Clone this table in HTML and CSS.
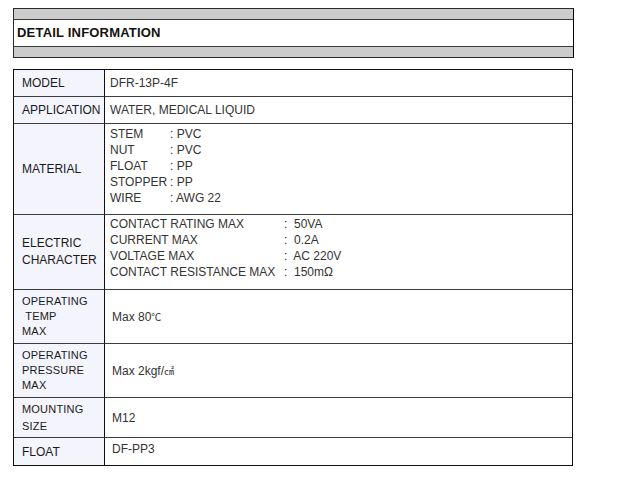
FILE: index.html
```html
<!DOCTYPE html>
<html>
<head>
<meta charset="utf-8">
<link rel="stylesheet" href="styles.css">
</head>
<body>
<div class="page">
  <div class="header">
    <div class="band"></div>
    <div class="title">DETAIL INFORMATION</div>
    <div class="band"></div>
  </div>

  <div class="spec">
    <div class="lbl">MODEL</div>
    <div class="val">DFR-13P-4F</div>

    <div class="lbl">APPLICATION</div>
    <div class="val">WATER, MEDICAL LIQUID</div>

    <div class="lbl">MATERIAL</div>
    <div class="val top">
      <div class="kv mat">
        <span class="k">STEM</span><span class="c">: PVC</span>
        <span class="k">NUT</span><span class="c">: PVC</span>
        <span class="k">FLOAT</span><span class="c">: PP</span>
        <span class="k">STOPPER</span><span class="c">: PP</span>
        <span class="k">WIRE</span><span class="c">: AWG 22</span>
      </div>
    </div>

    <div class="lbl multi">ELECTRIC<br>CHARACTER</div>
    <div class="val top elec-val">
      <div class="kv elec">
        <span class="k">CONTACT RATING MAX</span><span class="c">:&nbsp; 50VA</span>
        <span class="k">CURRENT MAX</span><span class="c">:&nbsp; 0.2A</span>
        <span class="k">VOLTAGE MAX</span><span class="c">:&nbsp; AC 220V</span>
        <span class="k">CONTACT RESISTANCE MAX</span><span class="c">:&nbsp; 150mΩ</span>
      </div>
    </div>

    <div class="lbl small">OPERATING<br>&nbsp;TEMP<br>MAX</div>
    <div class="val wide">Max 80<span class="unit">℃</span></div>

    <div class="lbl small">OPERATING<br>PRESSURE<br>MAX</div>
    <div class="val wide">Max 2kgf/<span class="unit">㎠</span></div>

    <div class="lbl small mount">MOUNTING<br>SIZE</div>
    <div class="val wide">M12</div>

    <div class="lbl last">FLOAT</div>
    <div class="val wide top float-val last">DF-PP3</div>
  </div>
</div>
</body>
</html>
```

FILE: styles.css
```css
html, body {
  margin: 0;
  padding: 0;
  background: #ffffff;
}

body {
  font-family: "Liberation Sans", Arial, "Noto Sans CJK KR", sans-serif;
  font-size: 12px;
  color: #222;
}

.page {
  padding: 8px 0 0 13px;
}

.header {
  width: 561px;
  box-sizing: border-box;
  border: 1px solid #2a2a2a;
  border-right-color: #000;
}

.band {
  height: 10px;
  background: #cccccc;
}

.title {
  height: 26px;
  border-top: 1px solid #3a3a3a;
  border-bottom: 1px solid #3a3a3a;
  background: #fff;
  padding-left: 3px;
  font-weight: bold;
  font-size: 13px;
  letter-spacing: 0.2px;
  line-height: 26px;
  color: #111;
}

.spec {
  margin-top: 11px;
  width: 560px;
  box-sizing: border-box;
  border: 1px solid #111;
  display: grid;
  grid-template-columns: 91px 1fr;
  grid-template-rows: 27px 27px 91px 75px 54px 54px 40px 27px;
}

.lbl, .val {
  box-sizing: border-box;
  border-bottom: 1px solid #3c3c3c;
  display: flex;
  align-items: center;
}

.lbl {
  background: #f4f4fc;
  border-right: 1px solid #111;
  padding-left: 8px;
  color: #1a1a1a;
  line-height: 16px;
}

.lbl.multi {
  line-height: 17px;
}

.lbl.small {
  font-size: 11px;
  line-height: 15px;
  letter-spacing: 0.2px;
}

.lbl.mount {
  line-height: 17px;
  padding-left: 8px;
}

.val {
  padding-left: 5px;
  color: #333;
  line-height: 16px;
}

.val.wide {
  padding-left: 7px;
}

.val.top {
  align-items: flex-start;
  padding-top: 2px;
}

.val.elec-val {
  padding-top: 1px;
}

.val.float-val {
  padding-top: 3px;
}

.last {
  border-bottom: none;
}

.kv {
  display: grid;
  line-height: 16px;
}

.kv.mat {
  grid-template-columns: 60px auto;
}

.kv.elec {
  grid-template-columns: 174px auto;
}

.unit {
  font-family: "Noto Sans CJK KR", sans-serif;
  font-size: 10px;
}
```
